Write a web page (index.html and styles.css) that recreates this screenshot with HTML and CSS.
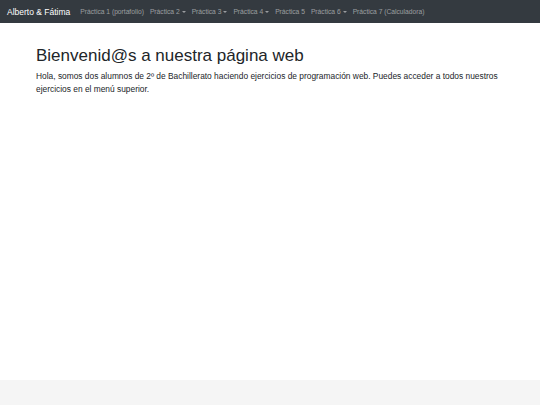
FILE: index.html
```html
<!DOCTYPE html>
<html lang="es">
<head>
<meta charset="utf-8">
<title>Alberto &amp; Fátima</title>
<link rel="stylesheet" href="styles.css">
</head>
<body>
<div class="page">
  <nav class="navbar">
    <a class="brand" href="#">Alberto &amp; Fátima</a>
    <ul class="nav">
      <li><a href="#">Práctica 1 (portafolio)</a></li>
      <li><a href="#" class="dd">Práctica 2</a></li>
      <li><a href="#" class="dd">Práctica 3</a></li>
      <li><a href="#" class="dd">Práctica 4</a></li>
      <li><a href="#">Práctica 5</a></li>
      <li><a href="#" class="dd">Práctica 6</a></li>
      <li><a href="#">Práctica 7 (Calculadora)</a></li>
    </ul>
  </nav>
  <main class="main">
    <h1 class="title">Bienvenid@s a nuestra página web</h1>
    <p class="lead">Hola, somos dos alumnos de 2º de Bachillerato haciendo ejercicios de programación web. Puedes acceder a todos nuestros ejercicios en el menú superior.</p>
  </main>
  <footer class="footer"></footer>
</div>
</body>
</html>
```

FILE: styles.css
```css
html, body {
  margin: 0;
  padding: 0;
  height: 100%;
}
body {
  font-family: "Liberation Sans", Arial, sans-serif;
  color: #212529;
  background: #fff;
}
.page {
  display: flex;
  flex-direction: column;
  min-height: 100%;
}
.navbar {
  display: flex;
  align-items: center;
  height: 23px;
  background: #343a40;
  padding: 0 7px;
}
.brand {
  color: #fff;
  font-size: 8.5px;
  text-decoration: none;
  margin-right: 10px;
}
.nav {
  display: flex;
  list-style: none;
  margin: 0;
  padding: 0;
  gap: 6px;
}
.nav a {
  color: rgba(255,255,255,0.5);
  font-size: 6.7px;
  text-decoration: none;
  display: flex;
  align-items: center;
}
.nav a.dd::after {
  content: "";
  display: inline-block;
  margin-left: 2px;
  border-top: 2px solid currentColor;
  border-left: 2px solid transparent;
  border-right: 2px solid transparent;
}
.main {
  flex: 1;
  padding: 23px 36px 0;
}
.title {
  font-size: 17px;
  font-weight: 400;
  margin: 0 0 4px;
  line-height: 1.2;
  color: #212529;
}
.lead {
  font-size: 8.4px;
  line-height: 13px;
  margin: 0;
  max-width: 475px;
}
.footer {
  height: 25px;
  background: #f5f5f5;
}
```
